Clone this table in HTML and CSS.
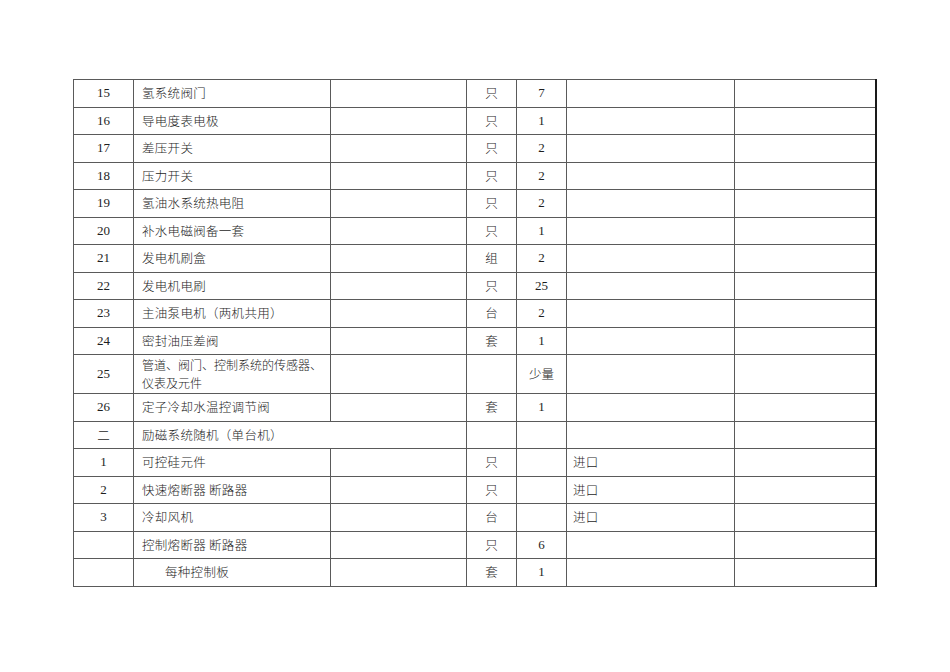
FILE: index.html
```html
<!DOCTYPE html>
<html lang="zh">
<head>
<meta charset="utf-8">
<title>设备清单</title>
<link rel="stylesheet" href="styles.css">
</head>
<body>
<div class="page">
<table class="list">
<colgroup>
<col class="c-no"><col class="c-name"><col class="c-spec"><col class="c-unit"><col class="c-qty"><col class="c-note"><col class="c-extra">
</colgroup>
<tbody>
<tr><td class="num">15</td><td class="name">氢系统阀门</td><td></td><td class="unit">只</td><td class="num">7</td><td></td><td></td></tr>
<tr><td class="num">16</td><td class="name">导电度表电极</td><td></td><td class="unit">只</td><td class="num">1</td><td></td><td></td></tr>
<tr><td class="num">17</td><td class="name">差压开关</td><td></td><td class="unit">只</td><td class="num">2</td><td></td><td></td></tr>
<tr><td class="num">18</td><td class="name">压力开关</td><td></td><td class="unit">只</td><td class="num">2</td><td></td><td></td></tr>
<tr><td class="num">19</td><td class="name">氢油水系统热电阻</td><td></td><td class="unit">只</td><td class="num">2</td><td></td><td></td></tr>
<tr><td class="num">20</td><td class="name">补水电磁阀备一套</td><td></td><td class="unit">只</td><td class="num">1</td><td></td><td></td></tr>
<tr><td class="num">21</td><td class="name">发电机刷盒</td><td></td><td class="unit">组</td><td class="num">2</td><td></td><td></td></tr>
<tr><td class="num">22</td><td class="name">发电机电刷</td><td></td><td class="unit">只</td><td class="num">25</td><td></td><td></td></tr>
<tr><td class="num">23</td><td class="name">主油泵电机（两机共用）</td><td></td><td class="unit">台</td><td class="num">2</td><td></td><td></td></tr>
<tr><td class="num">24</td><td class="name">密封油压差阀</td><td></td><td class="unit">套</td><td class="num">1</td><td></td><td></td></tr>
<tr class="tall"><td class="num">25</td><td class="name two"><span class="ln">管道、阀门、控制系统的传感器、</span><span class="ln">仪表及元件</span></td><td></td><td class="unit"></td><td class="unit">少量</td><td></td><td></td></tr>
<tr><td class="num">26</td><td class="name">定子冷却水温控调节阀</td><td></td><td class="unit">套</td><td class="num">1</td><td></td><td></td></tr>
<tr><td class="unit">二</td><td class="name" colspan="2">励磁系统随机（单台机）</td><td></td><td></td><td></td><td></td></tr>
<tr><td class="num">1</td><td class="name">可控硅元件</td><td></td><td class="unit">只</td><td class="num"></td><td class="name note">进口</td><td></td></tr>
<tr><td class="num">2</td><td class="name">快速熔断器&nbsp;断路器</td><td></td><td class="unit">只</td><td class="num"></td><td class="name note">进口</td><td></td></tr>
<tr><td class="num">3</td><td class="name">冷却风机</td><td></td><td class="unit">台</td><td class="num"></td><td class="name note">进口</td><td></td></tr>
<tr><td class="num"></td><td class="name">控制熔断器&nbsp;断路器</td><td></td><td class="unit">只</td><td class="num">6</td><td></td><td></td></tr>
<tr><td class="num"></td><td class="name indent">每种控制板</td><td></td><td class="unit">套</td><td class="num">1</td><td></td><td></td></tr>
</tbody>
</table>
</div>
</body>
</html>
```
FILE: styles.css
```css
html, body {
  margin: 0;
  padding: 0;
  background: #ffffff;
}
.page {
  padding: 79px 0 0 73px;
}
.list {
  border-collapse: collapse;
  table-layout: fixed;
  width: 802px;
  border: 1.5px solid #1a1a1a;
  border-right-width: 2px;
  font-family: "Liberation Serif", "Noto Sans CJK SC", serif;
  font-size: 13px;
  color: #1e1e1e;
}
.c-no { width: 60px; }
.c-name { width: 197px; }
.c-spec { width: 136px; }
.c-unit { width: 50px; }
.c-qty { width: 50px; }
.c-note { width: 168px; }
.c-extra { width: 141px; }
.list td {
  border: 1px solid #5a5a5a;
  height: 26.5px;
  padding: 0;
  vertical-align: middle;
  line-height: 16px;
  overflow: hidden;
  white-space: nowrap;
}
.list tr.tall td {
  height: 38px;
}
.list td.num,
.list td.unit {
  text-align: center;
}
.list td.unit {
  font-family: "Noto Sans CJK SC", sans-serif;
  font-weight: 300;
  font-size: 12.5px;
}
.list td.name {
  padding-left: 8px;
  font-family: "Noto Sans CJK SC", sans-serif;
  font-weight: 300;
  font-size: 12.5px;
  letter-spacing: 0.3px;
}
.list td.note {
  padding-left: 6px;
}
.list td.two {
  letter-spacing: 0;
  font-size: 12px;
}
.ln {
  display: block;
  line-height: 18px;
}
.list td.indent {
  padding-left: 31px;
}
```
